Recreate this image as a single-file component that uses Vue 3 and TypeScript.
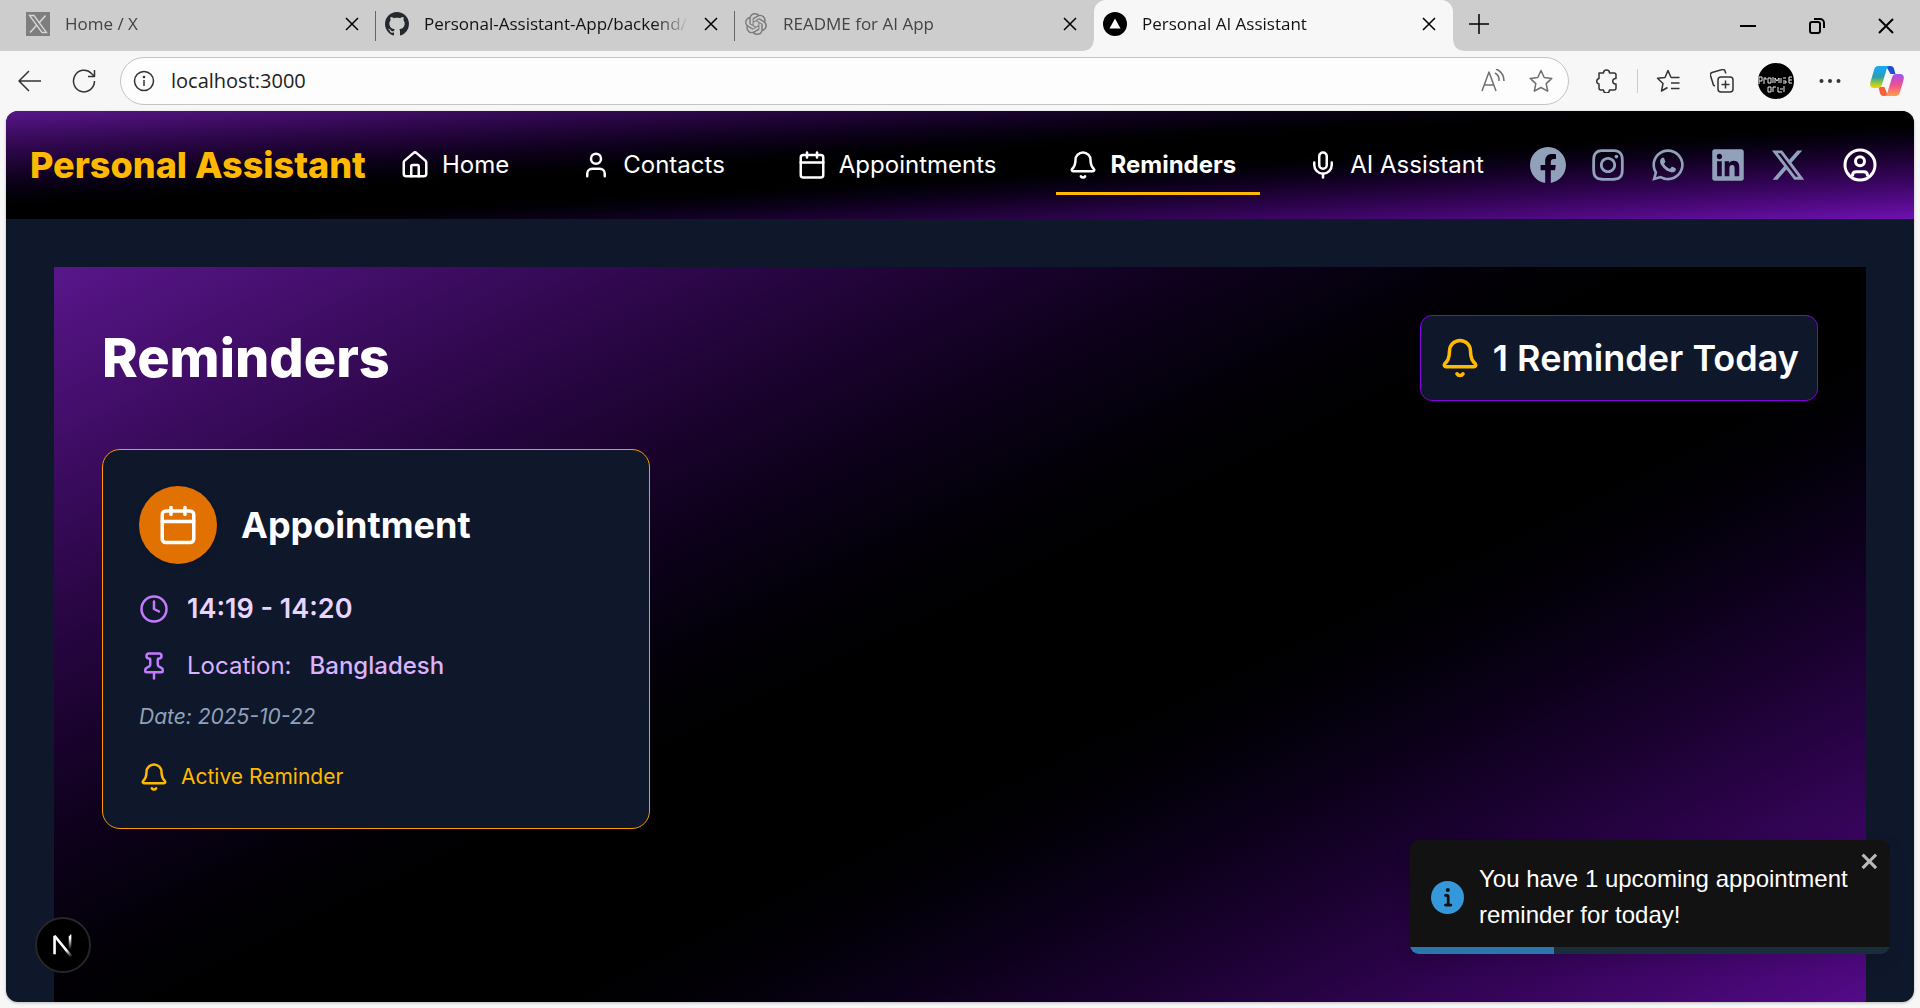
<script setup lang="ts">
import { ref } from 'vue'

interface BrowserTab {
  title: string
  icon: 'x' | 'github' | 'openai' | 'vercel'
  active?: boolean
  muted?: boolean
  divider?: boolean
}

interface NavLink {
  label: string
  icon: string
  active?: boolean
}

interface Social {
  name: string
  viewBox: string
  path: string
}

const tabs: BrowserTab[] = [
  { title: 'Home / X', icon: 'x', muted: true, divider: true },
  { title: 'Personal-Assistant-App/backend/.', icon: 'github', divider: true },
  { title: 'README for AI App', icon: 'openai', muted: true },
  { title: 'Personal AI Assistant', icon: 'vercel', active: true },
]

const address = ref('localhost:3000')

// 24 x 24 outline icons, one list of strokes per icon
const outline: Record<string, string[]> = {
  home: [
    'M15 21v-8a1 1 0 0 0-1-1h-4a1 1 0 0 0-1 1v8',
    'M3 10a2 2 0 0 1 .709-1.528l7-5.999a2 2 0 0 1 2.582 0l7 5.999A2 2 0 0 1 21 10v9a2 2 0 0 1-2 2H5a2 2 0 0 1-2-2z',
  ],
  user: ['M19 21v-2a4 4 0 0 0-4-4H9a4 4 0 0 0-4 4v2', 'M8 7a4 4 0 1 0 8 0a4 4 0 1 0-8 0'],
  calendar: ['M8 2v4', 'M16 2v4', 'M5 4h14a2 2 0 0 1 2 2v14a2 2 0 0 1-2 2H5a2 2 0 0 1-2-2V6a2 2 0 0 1 2-2z', 'M3 10h18'],
  bell: [
    'M10.268 21a2 2 0 0 0 3.464 0',
    'M3.262 15.326A1 1 0 0 0 4 17h16a1 1 0 0 0 .74-1.673C19.41 13.956 18 12.499 18 8A6 6 0 0 0 6 8c0 4.499-1.411 5.956-2.738 7.326',
  ],
  mic: ['M12 19v3', 'M19 10v2a7 7 0 0 1-14 0v-2', 'M12 2a3 3 0 0 1 3 3v7a3 3 0 0 1-6 0V5a3 3 0 0 1 3-3z'],
  clock: ['M12 6v6l4 2', 'M2 12a10 10 0 1 0 20 0a10 10 0 1 0-20 0'],
  pin: [
    'M12 17v5',
    'M9 10.76a2 2 0 0 1-1.11 1.79l-1.78.9A2 2 0 0 0 5 15.24V16a1 1 0 0 0 1 1h12a1 1 0 0 0 1-1v-.76a2 2 0 0 0-1.11-1.79l-1.78-.9A2 2 0 0 1 15 10.76V7a1 1 0 0 1 1-1 2 2 0 0 0 0-4H8a2 2 0 0 0 0 4 1 1 0 0 1 1 1z',
  ],
}

const links: NavLink[] = [
  { label: 'Home', icon: 'home' },
  { label: 'Contacts', icon: 'user' },
  { label: 'Appointments', icon: 'calendar' },
  { label: 'Reminders', icon: 'bell', active: true },
  { label: 'AI Assistant', icon: 'mic' },
]

const socials: Social[] = [
  {
    name: 'Facebook',
    viewBox: '0 0 16 16',
    path: 'M16 8.049c0-4.446-3.582-8.05-8-8.05C3.58 0-.002 3.603-.002 8.05c0 4.017 2.926 7.347 6.75 7.951v-5.625h-2.03V8.05H6.75V6.275c0-2.017 1.195-3.131 3.022-3.131.876 0 1.791.157 1.791.157v1.98h-1.009c-.993 0-1.303.621-1.303 1.258v1.51h2.218l-.354 2.326H9.25V16c3.824-.604 6.75-3.934 6.75-7.951',
  },
  {
    name: 'Instagram',
    viewBox: '0 0 448 512',
    path: 'M224.1 141c-63.6 0-114.9 51.3-114.9 114.9s51.3 114.9 114.9 114.9S339 319.5 339 255.9 287.7 141 224.1 141zm0 189.6c-41.1 0-74.7-33.5-74.7-74.7s33.5-74.7 74.7-74.7 74.7 33.5 74.7 74.7-33.6 74.7-74.7 74.7zm146.4-194.3c0 14.9-12 26.8-26.8 26.8-14.9 0-26.8-12-26.8-26.8s12-26.8 26.8-26.8 26.8 12 26.8 26.8zm76.1 27.2c-1.7-35.9-9.9-67.7-36.2-93.9-26.2-26.2-58-34.4-93.9-36.2-37-2.1-147.9-2.1-184.9 0-35.8 1.7-67.6 9.9-93.9 36.1s-34.4 58-36.2 93.9c-2.1 37-2.1 147.9 0 184.9 1.7 35.9 9.9 67.7 36.2 93.9s58 34.4 93.9 36.2c37 2.1 147.9 2.1 184.9 0 35.9-1.7 67.7-9.9 93.9-36.2 26.2-26.2 34.4-58 36.2-93.9 2.1-37 2.1-147.8 0-184.8zM398.8 388c-7.8 19.6-22.9 34.7-42.6 42.6-29.5 11.7-99.5 9-132.1 9s-102.7 2.6-132.1-9c-19.6-7.8-34.7-22.9-42.6-42.6-11.7-29.5-9-99.5-9-132.1s-2.6-102.7 9-132.1c7.8-19.6 22.9-34.7 42.6-42.6 29.5-11.7 99.5-9 132.1-9s102.7-2.6 132.1 9c19.6 7.8 34.7 22.9 42.6 42.6 11.7 29.5 9 99.5 9 132.1s2.7 102.7-9 132.1z',
  },
  {
    name: 'WhatsApp',
    viewBox: '0 0 448 512',
    path: 'M380.9 97.1C339 55.1 283.2 32 223.9 32c-122.4 0-222 99.6-222 222 0 39.1 10.2 77.3 29.6 111L0 480l117.7-30.9c32.4 17.7 68.9 27 106.1 27h.1c122.3 0 224.1-99.6 224.1-222 0-59.3-25.2-115-67.1-157zm-157 341.6c-33.2 0-65.7-8.9-94-25.7l-6.7-4-69.8 18.3L72 359.2l-4.4-7c-18.5-29.4-28.2-63.3-28.2-98.2 0-101.7 82.8-184.5 184.6-184.5 49.3 0 95.6 19.2 130.4 54.1 34.8 34.9 56.2 81.2 56.1 130.5 0 101.8-84.9 184.6-186.6 184.6zm101.2-138.2c-5.5-2.8-32.8-16.2-37.9-18-5.1-1.9-8.8-2.8-12.5 2.8-3.7 5.6-14.3 18-17.6 21.8-3.2 3.7-6.5 4.2-12 1.4-32.6-16.3-54-29.1-75.5-66-5.7-9.8 5.7-9.1 16.3-30.3 1.8-3.7.9-6.9-.5-9.7-1.4-2.8-12.5-30.1-17.1-41.2-4.5-10.8-9.1-9.3-12.5-9.5-3.2-.2-6.9-.2-10.6-.2-3.7 0-9.7 1.4-14.8 6.9-5.1 5.6-19.4 19-19.4 46.3 0 27.3 19.9 53.7 22.6 57.4 2.8 3.7 39.1 59.7 94.8 83.8 35.2 15.2 49 16.5 66.6 13.9 10.7-1.6 32.8-13.4 37.4-26.4 4.6-13 4.6-24.1 3.2-26.4-1.3-2.5-5-3.9-10.5-6.6z',
  },
  {
    name: 'LinkedIn',
    viewBox: '0 0 448 512',
    path: 'M416 32H31.9C14.3 32 0 46.5 0 64.3v383.4C0 465.5 14.3 480 31.9 480H416c17.6 0 32-14.5 32-32.3V64.3c0-17.8-14.4-32.3-32-32.3zM135.4 416H69V202.2h66.5V416zm-33.2-243c-21.3 0-38.5-17.3-38.5-38.5S80.9 96 102.2 96c21.2 0 38.5 17.3 38.5 38.5 0 21.3-17.2 38.5-38.5 38.5zm282.1 243h-66.4V312c0-24.8-.5-56.7-34.5-56.7-34.6 0-39.9 27-39.9 54.9V416h-66.4V202.2h63.7v29.2h.9c8.9-16.8 30.6-34.5 62.9-34.5 67.2 0 79.7 44.3 79.7 101.9V416z',
  },
  {
    name: 'X',
    viewBox: '0 0 512 512',
    path: 'M389.2 48h70.6L305.6 224.2 487 464H345L233.7 318.6 106.5 464H35.8L200.7 275.5 26.8 48H172.4L272.9 180.9 389.2 48zM364.4 421.8h39.1L151.1 88h-42L364.4 421.8z',
  },
]

const reminder = {
  type: 'Appointment',
  time: '14:19 - 14:20',
  location: 'Bangladesh',
  date: '2025-10-22',
}

const progress = 30
</script>

<template>
  <div class="window">
    <header class="tab-strip">
      <div class="tabs">
        <div v-for="tab in tabs" :key="tab.title" class="tab" :class="{ active: tab.active, muted: tab.muted, divider: tab.divider }">
          <svg v-if="tab.icon === 'x'" class="favicon" viewBox="0 0 24 24">
            <rect width="24" height="24" fill="#7e7e7e" />
            <path d="M3.500 3.500h4.500L20.500 20.500H16z" fill="none" stroke="#d8d8d8" stroke-width="1.300" />
            <path d="M19.500 3.500L13 11M10.500 13.500L4 20.500" fill="none" stroke="#d8d8d8" stroke-width="1.500" />
          </svg>
          <svg v-else-if="tab.icon === 'github'" class="favicon" viewBox="0 0 16 16">
            <path fill="#24292f" d="M8 0C3.580 0 0 3.580 0 8c0 3.540 2.290 6.530 5.470 7.590.4.070.55-.170.55-.380 0-.190-.010-.820-.010-1.490-2.010.370-2.530-.490-2.690-.940-.090-.230-.480-.940-.820-1.130-.280-.150-.680-.520-.010-.530.630-.010 1.080.580 1.230.820.720 1.210 1.870.870 2.330.660.070-.520.280-.870.510-1.070-1.780-.2-3.640-.890-3.640-3.950 0-.870.310-1.590.820-2.150-.080-.2-.360-1.020.080-2.120 0 0 .670-.210 2.200.820.640-.180 1.320-.270 2-.270s1.360.090 2 .270c1.530-1.040 2.200-.820 2.200-.820.440 1.100.160 1.920.080 2.120.510.560.820 1.270.820 2.150 0 3.070-1.870 3.750-3.650 3.950.290.250.540.730.540 1.480 0 1.070-.010 1.930-.010 2.200 0 .210.150.460.550.380A8.010 8.010 0 0 0 16 8c0-4.420-3.580-8-8-8z" />
          </svg>
          <svg v-else-if="tab.icon === 'openai'" class="favicon small" viewBox="0 0 24 24">
            <path fill="#7b7b7b" d="M22.2819 9.8211a5.9847 5.9847 0 0 0-.5157-4.9108 6.0462 6.0462 0 0 0-6.5098-2.9A6.0651 6.0651 0 0 0 4.9807 4.1818a5.9847 5.9847 0 0 0-3.9977 2.9 6.0462 6.0462 0 0 0 .7427 7.0966 5.98 5.98 0 0 0 .511 4.9107 6.051 6.051 0 0 0 6.5146 2.9001A5.9847 5.9847 0 0 0 13.2599 24a6.0557 6.0557 0 0 0 5.7718-4.2058 5.9894 5.9894 0 0 0 3.9977-2.9001 6.0557 6.0557 0 0 0-.7475-7.0729zm-9.022 12.6081a4.4755 4.4755 0 0 1-2.8764-1.0408l.1419-.0804 4.7783-2.7582a.7948.7948 0 0 0 .3927-.6813v-6.7369l2.02 1.1686a.071.071 0 0 1 .038.052v5.5826a4.504 4.504 0 0 1-4.4945 4.4944zm-9.6607-4.1254a4.4708 4.4708 0 0 1-.5346-3.0137l.142.0852 4.783 2.7582a.7712.7712 0 0 0 .7806 0l5.8428-3.3685v2.3324a.0804.0804 0 0 1-.0332.0615L9.74 19.9502a4.4992 4.4992 0 0 1-6.1408-1.6464zM2.3408 7.8956a4.485 4.485 0 0 1 2.3655-1.9728V11.6a.7664.7664 0 0 0 .3879.6765l5.8144 3.3543-2.0201 1.1685a.0757.0757 0 0 1-.071 0l-4.8303-2.7865A4.504 4.504 0 0 1 2.3408 7.872zm16.5963 3.8558L13.1038 8.364 15.1192 7.2a.0757.0757 0 0 1 .071 0l4.8303 2.7913a4.4944 4.4944 0 0 1-.6765 8.1042v-5.6772a.79.79 0 0 0-.407-.667zm2.0107-3.0231l-.142-.0852-4.7735-2.7818a.7759.7759 0 0 0-.7854 0L9.409 9.2297V6.8974a.0662.0662 0 0 1 .0284-.0615l4.8303-2.7866a4.4992 4.4992 0 0 1 6.6802 4.66zM8.3065 12.863l-2.02-1.1638a.0804.0804 0 0 1-.038-.0567V6.0742a4.4992 4.4992 0 0 1 7.3757-3.4537l-.142.0805L8.704 5.459a.7948.7948 0 0 0-.3927.6813zm1.0976-2.3654l2.602-1.4998 2.6069 1.4998v2.9994l-2.5974 1.4997-2.6067-1.4997Z" />
          </svg>
          <svg v-else class="favicon" viewBox="0 0 24 24">
            <circle cx="12" cy="12" r="12" />
            <path d="M12 6.500L17.500 16.500h-11z" fill="#fff" />
          </svg>
          <span class="tab-title">{{ tab.title }}</span>
          <button class="tab-close" :aria-label="`Close ${tab.title}`">
            <svg viewBox="0 0 14 14"><path d="M1 1l12 12M13 1L1 13" /></svg>
          </button>
        </div>
        <button class="new-tab" aria-label="New tab">
          <svg viewBox="0 0 20 20"><path d="M10 0v20M0 10h20" /></svg>
        </button>
      </div>
      <div class="window-controls">
        <button aria-label="Minimise"><svg viewBox="0 0 16 16"><path d="M0 8h16" /></svg></button>
        <button aria-label="Restore">
          <svg viewBox="0 0 16 16"><rect x="1" y="4" width="10" height="11" rx="2" /><path d="M5 1h6a4 4 0 0 1 4 4v5" /></svg>
        </button>
        <button aria-label="Close window"><svg viewBox="0 0 16 16"><path d="M1 1l14 14M15 1L1 15" /></svg></button>
      </div>
    </header>

    <div class="toolbar">
      <button class="tool" aria-label="Back">
        <svg viewBox="0 0 24 24"><path d="M23 12H1M11 2L1 12l10 10" /></svg>
      </button>
      <button class="tool" aria-label="Reload">
        <svg viewBox="0 0 24 24"><path d="M22.500 12A10.500 10.800 0 1 1 19.500 4.500L22 7M22.500 1v6.500H16" /></svg>
      </button>
      <div class="address-bar">
        <svg class="info" viewBox="0 0 24 24">
          <circle cx="12" cy="12" r="9.500" />
          <path d="M12 11v6" />
          <circle cx="12" cy="8" r="0.600" />
        </svg>
        <input v-model="address" aria-label="Address" spellcheck="false" />
        <button class="tool faint" aria-label="Read aloud">
          <svg viewBox="0 0 24 24"><path d="M1 22L8 3l7 19M3.500 16h9M14 4a8 8 0 0 1 4 8M15 0a13 13 0 0 1 8 12" /></svg>
        </button>
        <button class="tool faint" aria-label="Add to favourites">
          <svg viewBox="0 0 24 24"><path d="M12 1.500l3.200 7 7.600.9-5.600 5.200 1.500 7.600L12 18.500l-6.700 3.700 1.500-7.600L1.200 9.400l7.600-.9z" /></svg>
        </button>
      </div>
      <div class="tools">
        <button class="tool" aria-label="Extensions">
          <svg viewBox="0 0 24 24"><path d="M4 4h4.500a3 3 0 0 1 6 0H19a2 2 0 0 1 2 2v3.500h-1a2.800 2.800 0 0 0 0 5.500h1v4a2 2 0 0 1-2 2h-4.500a3 3 0 0 1-6 0H6a2 2 0 0 1-2-2v-4a2.800 2.800 0 0 1 0-5.500V4z" /></svg>
        </button>
        <span class="rule"></span>
        <button class="tool" aria-label="Favourites">
          <svg viewBox="0 0 24 24"><path d="M15 8.500L12 1.500l-3 7-7.500.8 5.500 5.200-1.500 7.500 6-3.500M15 8.500h8.500M15 14h8.500M15 19.500h8.500" /></svg>
        </button>
        <button class="tool" aria-label="Collections">
          <svg viewBox="0 0 24 24"><path d="M5 17l-1.500-.8-3-9.700a2.500 2.500 0 0 1 1.600-3l10-2.900a2.500 2.500 0 0 1 3 1.700l.7 2.200" /><rect x="8" y="8" width="15" height="15" rx="3" /><path d="M15.500 11.500v8M11.500 15.500h8" /></svg>
        </button>
        <button class="avatar" aria-label="Profile">
          <svg viewBox="0 0 36 36">
            <circle cx="18" cy="18" r="18" />
            <path d="M1 14v7M1 14h3v4H1M6 21v-6h2v2M10 15h3v5h-3zM15 20v-6M17 20v-5l2 3 2-3v5M23 15v5M25 15h3M25 18h3v2h-3M31 14h3M31 14v6h3M31 17h3M10 24v5h3v-5zM15 29v-5h3M20 24v5h4M26 23v6M22 26h3" />
          </svg>
        </button>
        <button class="tool" aria-label="Settings and more">
          <svg viewBox="0 0 24 24"><g class="dots"><circle cx="3.500" cy="12" r="2" /><circle cx="12" cy="12" r="2" /><circle cx="20.500" cy="12" r="2" /></g></svg>
        </button>
        <button class="copilot" aria-label="Copilot">
          <svg viewBox="0 0 34 30">
            <defs>
              <linearGradient id="cp-a" x1="0" y1="0" x2="0" y2="1">
                <stop offset="0.100" stop-color="#1aa7f0" /><stop offset="0.500" stop-color="#2b9fb0" /><stop offset="0.750" stop-color="#8cc63f" /><stop offset="1" stop-color="#ffd500" />
              </linearGradient>
              <linearGradient id="cp-b" x1="0" y1="0" x2="0" y2="1">
                <stop offset="0" stop-color="#a252f0" /><stop offset="0.500" stop-color="#ee5090" /><stop offset="1" stop-color="#ffa048" />
              </linearGradient>
            </defs>
            <path d="M16 0h4.500c2 0 3 1 3.600 3l1.400 5h-5z" fill="#1f4fd0" />
            <path d="M18 30h-4.500c-2 0-3-1-3.600-3L8.500 21h6z" fill="#f7623c" />
            <path d="M8.500 0H20c-2 0-2.800 1.300-3.300 3L12 18.500c-.6 2-1.800 3.500-4 3.500H4c-3.500 0-4.500-2.500-3.500-6L4 4c.8-2.800 2-4 4.500-4z" fill="url(#cp-a)" />
            <path d="M25.500 30H14c2 0 2.800-1.300 3.300-3L22 11.500c.6-2 1.800-3.500 4-3.500h4c3.500 0 4.500 2.500 3.500 6L30 26c-.8 2.800-2 4-4.500 4z" fill="url(#cp-b)" />
          </svg>
        </button>
      </div>
    </div>

    <div class="viewport">
      <nav class="navbar">
        <a class="brand" href="#">Personal Assistant</a>
        <div class="nav-links">
          <a v-for="link in links" :key="link.label" href="#" class="nav-link" :class="{ active: link.active }">
            <svg class="line-icon" viewBox="0 0 24 24"><path v-for="d in outline[link.icon]" :key="d" :d="d" /></svg>
            <span>{{ link.label }}</span>
          </a>
        </div>
        <div class="nav-side">
          <a v-for="social in socials" :key="social.name" href="#" :aria-label="social.name">
            <svg :viewBox="social.viewBox"><path :d="social.path" /></svg>
          </a>
          <button class="account" aria-label="Account">
            <svg viewBox="0 0 24 24"><circle cx="12" cy="12" r="10" /><circle cx="12" cy="9.500" r="3" /><path d="M7 19.500v-.5c0-1.500 1-2.500 2.500-2.500h5c1.500 0 2.500 1 2.500 2.500v.5" /></svg>
          </button>
        </div>
      </nav>

      <main class="page">
        <section class="panel">
          <div class="panel-head">
            <h1>Reminders</h1>
            <div class="today">
              <svg class="line-icon large" viewBox="0 0 24 24"><path v-for="d in outline.bell" :key="d" :d="d" /></svg>
              <span>1 Reminder Today</span>
            </div>
          </div>

          <div class="cards">
            <article class="card">
              <div class="card-head">
                <span class="badge"><svg class="line-icon large" viewBox="0 0 24 24"><path v-for="d in outline.calendar" :key="d" :d="d" /></svg></span>
                <h2>{{ reminder.type }}</h2>
              </div>
              <div class="row time">
                <svg class="line-icon" viewBox="0 0 24 24"><path v-for="d in outline.clock" :key="d" :d="d" /></svg>
                <span>{{ reminder.time }}</span>
              </div>
              <div class="row place">
                <svg class="line-icon" viewBox="0 0 24 24"><path v-for="d in outline.pin" :key="d" :d="d" /></svg>
                <span>Location:</span>
                <strong>{{ reminder.location }}</strong>
              </div>
              <p class="date">Date: {{ reminder.date }}</p>
              <div class="status">
                <svg class="line-icon" viewBox="0 0 24 24"><path v-for="d in outline.bell" :key="d" :d="d" /></svg>
                <span>Active Reminder</span>
              </div>
            </article>
          </div>
        </section>
      </main>

      <div class="toast" role="alert">
        <div class="toast-body">
          <svg class="toast-icon" viewBox="0 0 24 24"><path d="M12 0a12 12 0 1012 12A12.013 12.013 0 0012 0zm.25 5a1.5 1.5 0 11-1.5 1.5 1.5 1.5 0 011.5-1.5zm2.25 13.5h-4a1 1 0 010-2h.75a.25.25 0 00.25-.25v-4.500a.25.25 0 00-.25-.25h-.75a1 1 0 010-2h1a2 2 0 012 2v4.750a.25.25 0 00.25.25h.75a1 1 0 110 2z" /></svg>
          <p>You have 1 upcoming appointment reminder for today!</p>
        </div>
        <button class="toast-close" aria-label="Dismiss">
          <svg viewBox="0 0 14 16"><path d="M7.710 8.230l3.750 3.750-1.480 1.480-3.750-3.750-3.750 3.750L1 11.980l3.750-3.750L1 4.480 2.480 3l3.750 3.750L9.980 3l1.480 1.480-3.750 3.750z" /></svg>
        </button>
        <div class="toast-track"><div class="toast-bar" :style="{ width: progress + '%' }"></div></div>
      </div>

      <button class="dev-badge" aria-label="Open Next.js Dev Tools">
        <svg viewBox="0 0 24 24">
          <defs>
            <linearGradient id="dv-a" x1="12" y1="12" x2="20" y2="23" gradientUnits="userSpaceOnUse"><stop offset="0.400" stop-color="#fff" /><stop offset="1" stop-color="#fff" stop-opacity="0" /></linearGradient>
            <linearGradient id="dv-b" x1="19" y1="3" x2="19" y2="16" gradientUnits="userSpaceOnUse"><stop offset="0.200" stop-color="#fff" /><stop offset="1" stop-color="#fff" stop-opacity="0" /></linearGradient>
          </defs>
          <path d="M4.200 20.500V3.500" stroke="#fff" />
          <path d="M4.200 3.500L20 23" stroke="url(#dv-a)" />
          <path d="M18.500 3.500h0.010V16" stroke="url(#dv-b)" />
        </svg>
      </button>
    </div>
  </div>
</template>

<style>
body {
  margin: 0;
  background: #f7f7f7;
}
</style>

<style scoped>
* {
  box-sizing: border-box;
}

.window {
  display: flex;
  flex-direction: column;
  height: 100vh;
  overflow: hidden;
  background: #f7f7f7;
  font-family: 'Open Sans', 'Noto Sans', sans-serif;
}

button {
  display: grid;
  place-items: center;
  padding: 0;
  border: 0;
  background: none;
  color: inherit;
  font: inherit;
}

a {
  color: inherit;
  text-decoration: none;
}

svg {
  display: block;
  flex: none;
}

h1,
h2,
p {
  margin: 0;
}

/* Tab strip */
.tab-strip {
  display: flex;
  flex: none;
  justify-content: space-between;
  height: 51px;
  background: #cdcdcd;
}

.tabs {
  display: flex;
  flex: 1;
  min-width: 0;
  padding-left: 17px;
}

.tab {
  position: relative;
  display: flex;
  flex: 0 1 359px;
  align-items: center;
  gap: 15px;
  min-width: 0;
  padding: 0 17px 3px 9px;
  font-size: 17px;
  color: #111;
}

.tab.muted {
  color: #444;
}

.tab.divider::after {
  content: '';
  position: absolute;
  right: 0;
  top: 11px;
  width: 1px;
  height: 30px;
  background: #666;
}

.tab.active {
  border-radius: 12px 12px 0 0;
  background: #f7f7f7;
}

.tab.active::before,
.tab.active::after {
  content: '';
  position: absolute;
  bottom: 0;
  width: 10px;
  height: 10px;
}

.tab.active::before {
  right: 100%;
  background: radial-gradient(circle at 0 0, transparent 9px, #f7f7f7 10px);
}

.tab.active::after {
  left: 100%;
  background: radial-gradient(circle at 100% 0, transparent 9px, #f7f7f7 10px);
}

.favicon {
  width: 24px;
  height: 24px;
}

.favicon.small {
  padding: 1px;
}

.tab-title {
  flex: 1;
  min-width: 0;
  overflow: hidden;
  white-space: nowrap;
  line-height: 24px;
  mask-image: linear-gradient(to right, #000 calc(100% - 36px), transparent);
}

.tab-close svg {
  width: 14px;
  height: 14px;
}

.new-tab {
  width: 52px;
  height: 48px;
}

.new-tab svg {
  width: 20px;
  height: 20px;
}

.tab-close svg,
.new-tab svg,
.window-controls svg {
  fill: none;
  stroke: #000;
  stroke-width: 1.5;
}

.window-controls {
  display: flex;
}

.window-controls button {
  width: 69px;
}

.window-controls svg {
  width: 16px;
  height: 16px;
  stroke-width: 2;
}

/* Toolbar */
.toolbar {
  display: flex;
  flex: none;
  align-items: center;
  gap: 18px;
  height: 60px;
  padding: 0 16px 0 12px;
}

.tool {
  width: 36px;
  height: 36px;
}

.tool svg,
.info {
  width: 24px;
  height: 24px;
  fill: none;
  stroke: #333;
  stroke-width: 1.5;
  stroke-linejoin: round;
}

.tool.faint svg {
  stroke: #707070;
}

.tool .dots {
  fill: #333;
  stroke: none;
}

.address-bar {
  display: flex;
  flex: 1;
  align-items: center;
  gap: 12px;
  height: 48px;
  padding: 0 9px 0 11px;
  border: 1px solid #c4c4c4;
  border-radius: 24px;
  background: #fdfdfd;
}

.address-bar input {
  flex: 1;
  min-width: 0;
  padding: 0 3px;
  border: 0;
  outline: 0;
  background: none;
  color: #222;
  font: 20px/28px 'Open Sans', 'Noto Sans', sans-serif;
}

.tools {
  display: flex;
  align-items: center;
  gap: 18px;
  padding-left: 2px;
}

.rule {
  width: 1px;
  height: 24px;
  margin: 0 -6px;
  background: #ccc;
}

.avatar svg {
  width: 36px;
  height: 36px;
}

.avatar path {
  fill: none;
  stroke: #eee;
  stroke-width: 1;
}

.copilot {
  margin-left: 4px;
}

.copilot svg {
  width: 34px;
  height: 30px;
}

/* Web page */
.viewport {
  position: relative;
  flex: 1;
  min-height: 0;
  margin: 0 6px 6px;
  overflow: hidden;
  border-radius: 12px;
  background: #0f172b;
  box-shadow: 0 1px 3px #00000040;
  color: #fff;
  font-family: Inter, sans-serif;
}

.line-icon {
  width: 30px;
  height: 30px;
  fill: none;
  stroke: currentColor;
  stroke-width: 2;
  stroke-linecap: round;
  stroke-linejoin: round;
}

.line-icon.large {
  width: 42px;
  height: 42px;
}

.navbar {
  display: flex;
  align-items: center;
  justify-content: space-between;
  height: 108px;
  padding: 0 36px 0 24px;
  background: linear-gradient(to bottom right in oklab, #59168b, #000, #6e11b0);
}

.brand {
  color: #ffb900;
  font-size: 36px;
  font-weight: 800;
  line-height: 48px;
  white-space: nowrap;
}

.nav-links {
  display: flex;
  gap: 36px;
}

.nav-link {
  display: flex;
  align-items: center;
  gap: 12px;
  height: 60px;
  padding: 0 24px 0 12px;
  font-size: 24px;
  line-height: 36px;
  white-space: nowrap;
}

.nav-link.active {
  box-shadow: inset 0 -3px #ffb900;
  font-weight: 700;
}

.nav-side {
  display: flex;
  gap: 24px;
  color: #90a1b9;
}

.nav-side svg {
  width: 36px;
  height: 36px;
  fill: currentColor;
}

.nav-side .account {
  margin-left: 12px;
  color: #fff;
}

.nav-side .account svg {
  fill: none;
  stroke: currentColor;
  stroke-width: 2;
}

.page {
  padding: 48px;
}

.panel {
  min-height: calc(100vh - 117px);
  padding: 48px;
  background: linear-gradient(to bottom right in oklab, #59168b, #000, #6e11b0);
}

.panel-head {
  display: flex;
  align-items: center;
  justify-content: space-between;
  margin-bottom: 48px;
}

h1 {
  font-size: 54px;
  font-weight: 800;
  line-height: 60px;
}

.today {
  display: flex;
  align-items: center;
  gap: 12px;
  padding: 18px;
  border: 1px solid #8200db;
  border-radius: 12px;
  background: #0f172b;
  font-size: 36px;
  font-weight: 600;
  line-height: 48px;
}

.today svg {
  color: #ffb900;
}

.cards {
  display: grid;
  grid-template-columns: repeat(3, 1fr);
  gap: 36px;
}

.card {
  display: flex;
  flex-direction: column;
  gap: 18px;
  padding: 36px;
  border: 1px solid #fe9a00;
  border-radius: 18px;
  background: #0f172b;
}

.card-head {
  display: flex;
  align-items: center;
  gap: 24px;
  margin-bottom: 6px;
}

.badge {
  padding: 18px;
  border-radius: 50%;
  background: #e17100;
  box-shadow: 0 3px 6px #0000001a;
}

h2 {
  font-size: 36px;
  font-weight: 700;
  line-height: 48px;
}

.row {
  display: flex;
  align-items: center;
  gap: 18px;
}

.row svg {
  color: #c27aff;
}

.time {
  color: #e9d4ff;
  font-size: 27px;
  font-weight: 600;
  line-height: 42px;
}

.place {
  color: #dab2ff;
  font-size: 24px;
  line-height: 36px;
}

.place strong {
  font-weight: 500;
}

.date {
  color: #90a1b9;
  font-size: 21px;
  font-style: italic;
  line-height: 30px;
}

.status {
  display: flex;
  align-items: center;
  gap: 12px;
  margin-top: 12px;
  color: #ffb900;
  font-size: 21px;
  line-height: 30px;
}

/* Notification */
.toast {
  position: absolute;
  right: 24px;
  bottom: 48px;
  width: 480px;
  overflow: hidden;
  border-radius: 9px;
  background: #121212;
  box-shadow: 0 6px 18px #0000001a;
  font-family: 'Liberation Sans', Arial, sans-serif;
}

.toast-body {
  display: flex;
  align-items: center;
  gap: 15px;
  padding: 21px 36px 14px 21px;
}

.toast-icon {
  width: 33px;
  height: 33px;
  fill: #3498db;
}

.toast p {
  font-size: 24px;
  line-height: 36px;
}

.toast-close {
  position: absolute;
  top: 9px;
  right: 9px;
}

.toast-close svg {
  width: 21px;
  height: 24px;
  fill: #b8b8b8;
}

.toast-track {
  height: 7px;
  background: #192d3a;
}

.toast-bar {
  height: 100%;
  background: #2a77ad;
}

.dev-badge {
  position: absolute;
  left: 29px;
  bottom: 29px;
  width: 56px;
  height: 56px;
  border: 2px solid #262626;
  border-radius: 50%;
  background: #000;
}

.dev-badge svg {
  width: 26px;
  height: 26px;
  fill: none;
  stroke-width: 2.4;
}
</style>
